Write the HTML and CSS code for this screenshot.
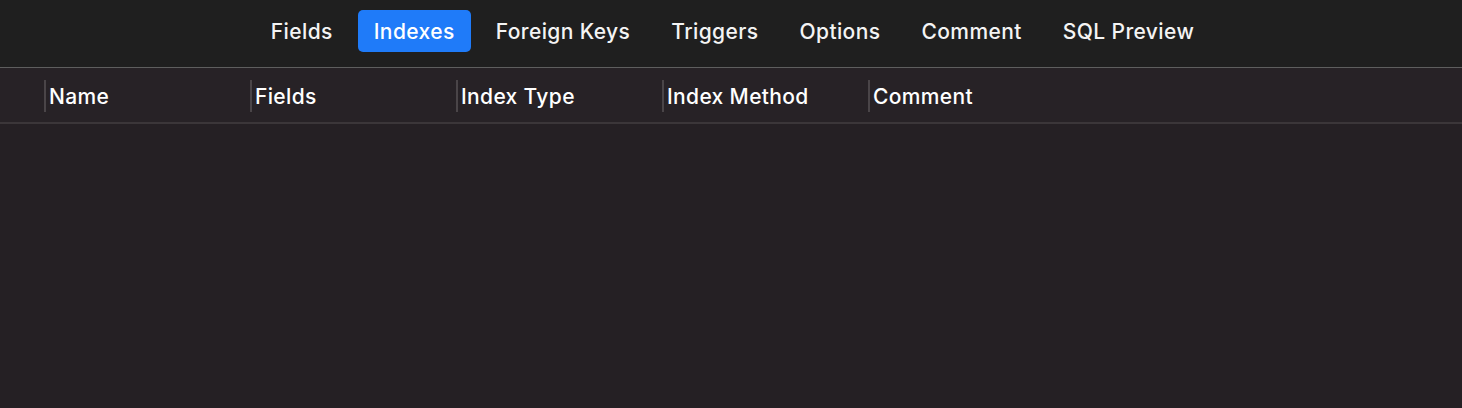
FILE: index.html
```html
<!DOCTYPE html>
<html>
<head>
<meta charset="utf-8">
<link rel="stylesheet" href="styles.css">
</head>
<body>
<div class="app">
  <nav class="tabs">
    <div class="tab">Fields</div>
    <div class="tab active">Indexes</div>
    <div class="tab">Foreign Keys</div>
    <div class="tab">Triggers</div>
    <div class="tab">Options</div>
    <div class="tab">Comment</div>
    <div class="tab">SQL Preview</div>
  </nav>
  <div class="table">
    <div class="thead">
      <div class="th">Name</div>
      <div class="th">Fields</div>
      <div class="th">Index Type</div>
      <div class="th">Index Method</div>
      <div class="th">Comment</div>
    </div>
    <div class="tbody"></div>
  </div>
</div>
</body>
</html>
```
FILE: styles.css
```css
html, body {
  margin: 0;
  padding: 0;
  height: 100%;
  background: #252024;
}
body {
  font-family: Inter, "Liberation Sans", sans-serif;
  color: #ffffff;
}
.app {
  display: flex;
  flex-direction: column;
  height: 100%;
}
.tabs {
  display: flex;
  justify-content: center;
  align-items: flex-start;
  gap: 9px;
  height: 68px;
  box-sizing: border-box;
  padding-top: 10px;
  padding-left: 3px;
  background: #1f1f1f;
  border-bottom: 1px solid #5e5e5e;
}
.tab {
  height: 42px;
  line-height: 44px;
  padding: 0 16px;
  font-size: 21px;
  letter-spacing: 0.4px;
  font-weight: 500;
  border-radius: 5px;
  color: #f4f4f4;
}
.tab.active {
  background: #1f7bf9;
  color: #ffffff;
}
.table {
  flex: 1;
  display: flex;
  flex-direction: column;
}
.thead {
  display: flex;
  height: 54px;
  box-sizing: border-box;
  align-items: flex-start;
  padding-top: 12px;
  padding-left: 44px;
  background: #272226;
}
.th {
  width: 206px;
  box-sizing: border-box;
  border-left: 2px solid #4a4548;
  padding-left: 3px;
  height: 32px;
  line-height: 34px;
  font-size: 21px;
  letter-spacing: 0.35px;
  font-weight: 500;
}
.tbody {
  flex: 1;
  border-top: 2px solid #3b3639;
  background: #252024;
}
```
